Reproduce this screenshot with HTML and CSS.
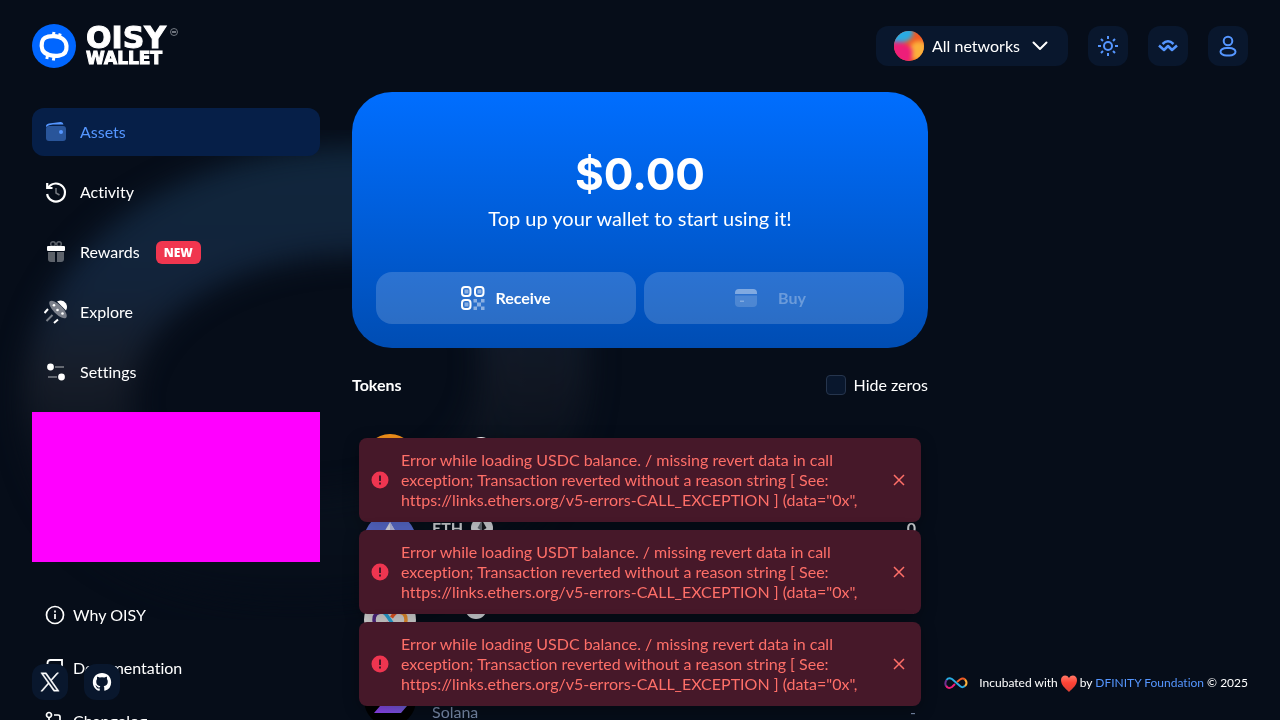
FILE: index.html
```html
<!DOCTYPE html>
<html lang="en">
<head>
<meta charset="utf-8">
<meta name="viewport" content="width=device-width, initial-scale=1">
<title>OISY Wallet</title>
<link rel="stylesheet" href="styles.css">
</head>
<body>
<svg class="backdrop" viewBox="0 0 1280 720" preserveAspectRatio="xMidYMin slice" aria-hidden="true">
  <defs>
    <linearGradient id="ring" gradientUnits="userSpaceOnUse" x1="300" y1="150" x2="300" y2="600">
      <stop offset="0" stop-color="#10263c"/>
      <stop offset=".3" stop-color="#12233a"/>
      <stop offset=".5" stop-color="#171d29"/>
      <stop offset=".65" stop-color="#0d141f"/>
      <stop offset=".85" stop-color="#070f1b"/>
      <stop offset="1" stop-color="#060d19"/>
    </linearGradient>
    <linearGradient id="fade" gradientUnits="userSpaceOnUse" x1="0" y1="0" x2="640" y2="0">
      <stop offset="0" stop-color="#fff"/>
      <stop offset=".55" stop-color="#fff"/>
      <stop offset=".8" stop-color="#aaa"/>
      <stop offset="1" stop-color="#999"/>
    </linearGradient>
    <mask id="side" maskUnits="userSpaceOnUse" x="-60" y="0" width="760" height="720"><rect x="-60" width="760" height="720" fill="url(#fade)"/></mask>
    <filter id="soft" x="-20%" y="-20%" width="140%" height="140%" color-interpolation-filters="sRGB"><feGaussianBlur stdDeviation="14"/></filter>
  </defs>
  <g mask="url(#side)"><path filter="url(#soft)" d="M78 400C78 290 190 200 370 200C470 200 535 260 535 365C535 490 430 550 300 550C160 550 78 500 78 400Z" fill="none" stroke="url(#ring)" stroke-width="108"/></g>
</svg>
<div class="app">
  <header class="header">
    <a class="logo" href="#" aria-label="OISY Wallet">
      <svg width="44" height="44" viewBox="0 0 44 44"><circle cx="22" cy="22" r="22" fill="#0066ff"/><g fill="none" stroke="#fff"><path stroke-width="4.200" d="M10 18C11 13 16 12 22 12.200C29 12.500 34 16 34.500 22C35 28 32 31 27 31.700C21 32.500 13 31 10.500 26C9.500 23.500 9.300 21 10 18Z"/><path stroke-width="3" d="M21 13l1-5M27 14l1.200-4.500M15.800 30l-1 5M22.300 31.500l-1 5"/></g></svg>
      <span class="wordmark"><span class="wordmark-top">OISY</span><span class="wordmark-sub">WALLET</span></span>
      <svg class="mark" width="8" height="8" viewBox="0 0 8 8"><circle cx="4" cy="4" r="3.500" fill="none" stroke="#8b9099" stroke-width=".8"/><path d="M2 4h4" stroke="#8b9099" stroke-width="1.600"/></svg>
    </a>
    <div class="tools">
      <button class="tool network">
        <svg width="30" height="30" viewBox="0 0 30 30"><defs><clipPath id="disc"><circle cx="15" cy="15" r="15"/></clipPath><filter id="melt" x="-30%" y="-30%" width="160%" height="160%" color-interpolation-filters="sRGB"><feGaussianBlur stdDeviation="2"/></filter></defs><g clip-path="url(#disc)"><rect width="30" height="30" fill="#f15a24"/><g filter="url(#melt)"><circle cx="25" cy="20" r="10" fill="#fbb03b"/><path fill="#29abe2" d="M-5-5H19V4Q15 11 9 11H-5Z"/><path fill="#ed1e79" d="M-5 12Q12 9 18 18Q20 26 13 35H-5Z"/></g></g></svg>
        <span>All networks</span>
        <svg width="20" height="20" viewBox="0 0 20 20" fill="none" stroke="#fff" stroke-width="2" stroke-linecap="round" stroke-linejoin="round"><path d="M3.500 6.500l6.500 6.500 6.500-6.500"/></svg>
      </button>
      <button class="tool" aria-label="Theme"><svg width="24" height="24" viewBox="0 0 24 24" fill="none" stroke="#5596ff" stroke-width="2"><circle cx="12" cy="12" r="4"/><path d="M12 2v3M12 19v3M2 12h3M19 12h3M5 5l2 2M17 17l2 2M5 19l2-2M17 7l2-2"/></svg></button>
      <button class="tool" aria-label="WalletConnect"><svg width="24" height="24" viewBox="0 0 24 24" fill="none" stroke="#5596ff" stroke-width="2.500" stroke-linejoin="round"><path d="M3 11.500l5 4.500 4-4 4 4 5-4.500"/><path d="M6.500 10Q12 4.500 17.500 10"/></svg></button>
      <button class="tool" aria-label="Account"><svg width="24" height="24" viewBox="0 0 24 24" fill="none" stroke="#5596ff" stroke-width="2"><circle cx="12" cy="7" r="4.300"/><rect x="4.500" y="14" width="15" height="7.500" rx="6" ry="3.750"/></svg></button>
    </div>
  </header>

  <div class="layout">
    <aside class="sidebar">
      <nav class="nav">
        <a class="nav-item active" href="#"><svg width="24" height="24" viewBox="0 0 24 24"><rect x="2" y="6" width="20" height="15" rx="3" fill="#5596ff" opacity=".45"/><path fill="#5596ff" d="M2 7Q1.500 4 5 3.400L16.500 2Q19 1.700 19.500 4.500H9Q4.500 4.500 2 7Z"/><circle cx="17" cy="12" r="2" fill="#5596ff"/></svg>Assets</a>
        <a class="nav-item" href="#"><svg width="24" height="24" viewBox="0 0 24 24" fill="none" stroke="#fff" stroke-width="2.200"><path d="M4.500 7.500A9 9 0 1 1 3.100 14M3.200 3v5h5.300"/><path d="M12 8v5l3.500 2" stroke-width="1.500" opacity=".45"/></svg>Activity</a>
        <a class="nav-item" href="#"><svg width="24" height="24" viewBox="0 0 24 24"><g fill="#fff"><rect x="3" y="6" width="18" height="5" rx="1"/><path opacity=".35" d="M4 12h7v10H7q-3 0-3-3ZM13 12h7v7q0 3-3 3h-4Z"/></g><g fill="none" stroke="#fff" stroke-width="1.500" opacity=".35"><circle cx="9" cy="4" r="2.300"/><circle cx="15" cy="4" r="2.300"/></g></svg>Rewards<span class="badge">NEW</span></a>
        <a class="nav-item" href="#"><svg width="24" height="24" viewBox="0 0 24 24"><path fill="#fff" d="M13 1.500q6-2.500 9 2 2 3.500 0 7Z"/><ellipse cx="14" cy="9.500" rx="4.500" ry="11.500" fill="#7b808b" transform="rotate(-45 14 9.500)"/><g fill="#fff"><circle cx="10" cy="5.200" r="1.300"/><circle cx="13.500" cy="10" r="1.300"/><circle cx="18.500" cy="13.500" r="1.300"/></g><g stroke="#fff" stroke-width="2"><path d="M.5 13L4 9M10 23l4-3.500"/><path opacity=".45" d="M2.500 21l6-6"/></g></svg>Explore</a>
        <a class="nav-item" href="#"><svg width="24" height="24" viewBox="0 0 24 24" fill="#fff"><circle cx="6.500" cy="7" r="3.400"/><circle cx="17.500" cy="17" r="3.400"/><path d="M11 7h9M4 17h9" stroke="#fff" stroke-width="1.500" opacity=".45"/></svg>Settings</a>
      </nav>
      <div class="promo"></div>
      <nav class="links">
        <a class="link" href="#"><svg width="20" height="20" viewBox="0 0 20 20" fill="none" stroke="#fff" stroke-width="1.700"><circle cx="10" cy="10" r="8.500"/><path d="M10 9v5M10 5.500v2"/></svg>Why OISY</a>
        <a class="link" href="#"><svg width="20" height="20" viewBox="0 0 20 20" fill="none" stroke="#fff" stroke-width="1.800"><path d="M2.500 17V5q0-3 3-3H17v16H5q-2.500 0-2.500-2t2.500-2h12"/></svg>Documentation</a>
        <a class="link" href="#"><svg width="20" height="20" viewBox="0 0 20 20" fill="none" stroke="#fff" stroke-width="1.700"><circle cx="4" cy="4" r="2.500"/><circle cx="15" cy="16" r="2.500"/><path d="M4 7v12M9 4h4q2 0 2 2v7"/></svg>Changelog</a>
      </nav>
    </aside>

    <main class="content">
      <section class="hero">
        <div class="amount">$0.00</div>
        <p class="hint">Top up your wallet to start using it!</p>
        <div class="actions">
          <button class="action receive"><svg width="24" height="24" viewBox="0 0 24 24"><g fill="none" stroke="#fff" stroke-width="2"><rect x="1" y="1" width="8.500" height="9" rx="3"/><rect x="14" y="1" width="8.500" height="9" rx="3"/><rect x="1" y="14" width="8.500" height="9" rx="3"/></g><g fill="#fff" opacity=".45"><rect x="3.500" y="3.500" width="4" height="4"/><rect x="16.500" y="3.500" width="4" height="4"/><rect x="3.500" y="16.500" width="4" height="4"/><path d="M12.500 13H16v3.500h4V13h3.500v3.500H20v4h3.500V24H20v-3.500h-4V24h-3.500v-3.500H16v-4h-3.500Z"/></g></svg>Receive</button>
          <button class="action buy" disabled><svg width="24" height="24" viewBox="0 0 24 24" fill="#fff"><path d="M1 8V7q0-4 4-4h14q4 0 4 4v1Z"/><path opacity=".4" d="M1 9.500h22V17q0 4-4 4H5q-4 0-4-4Z"/><path d="M6 14.500h4v1.500H6Z"/></svg>Buy</button>
        </div>
      </section>
      <div class="tokens-head">
        <h2>Tokens</h2>
        <label class="hide-zeros"><input type="checkbox">Hide zeros</label>
      </div>
      <ul class="tokens">
        <li class="token">
          <svg width="52" height="52" viewBox="0 0 52 52"><circle cx="26" cy="26" r="26" fill="#f7931a"/><path d="M20 14h8q6 0 6 6t-6 6h-8Zm0 12h9q6 0 6 6t-6 6h-9Z" fill="none" stroke="#fff" stroke-width="4"/></svg>
          <div class="token-text"><div class="token-name">BTC<svg width="22" height="22" viewBox="0 0 22 22"><circle cx="11" cy="11" r="11" fill="#fff"/></svg></div><div class="token-sub">Bitcoin</div></div>
          <div class="token-value"><div class="token-name">0</div><div class="token-sub">-</div></div>
        </li>
        <li class="token">
          <svg width="52" height="52" viewBox="0 0 52 52"><circle cx="26" cy="26" r="26" fill="#5c6fd6"/><path fill="#e8e9f3" d="M26 8l11 19-11 6.500L15 27Z"/><path fill="#c0c6ee" d="M26 8l11 19-11 6.500ZM26 45L15 30l11 6.500L37 30Z"/></svg>
          <div class="token-text"><div class="token-name">ETH<svg width="22" height="22" viewBox="0 0 22 22"><circle cx="11" cy="11" r="11" fill="#d9dce0"/><path fill="#687078" d="M11 3L6.500 11l4.500 3Z"/><path fill="#15191e" d="M11 3l4.500 8-4.500 3ZM6.500 13l4.500 3 4.500-3-4.500 6Z"/></svg></div><div class="token-sub">Ethereum</div></div>
          <div class="token-value"><div class="token-name">0</div><div class="token-sub">-</div></div>
        </li>
        <li class="token">
          <svg width="52" height="52" viewBox="0 0 52 52"><circle cx="26" cy="26" r="26" fill="#dcdcdc"/><g fill="none" stroke-width="3.500"><path stroke="#522785" d="M18 34Q10 34 10 26T18 18"/><path stroke="#f2932e" d="M34 18Q42 18 42 26T34 34"/><path stroke="#29abe2" d="M18 18Q21 18 26 26T34 34"/><path stroke="#ed1e79" d="M18 34Q21 34 24.500 28.500"/><path stroke="#f15a24" d="M27.500 23.500Q31 18 34 18"/></g></svg>
          <div class="token-text"><div class="token-name">ICP<svg width="22" height="22" viewBox="0 0 22 22"><circle cx="11" cy="11" r="11" fill="#d9dce0"/></svg></div><div class="token-sub">Internet Computer</div></div>
          <div class="token-value"><div class="token-name">0</div><div class="token-sub">-</div></div>
        </li>
        <li class="token">
          <svg width="52" height="52" viewBox="0 0 52 52"><defs><linearGradient id="sol" x1="0" y1="1" x2="1" y2="0"><stop stop-color="#9040f0"/><stop offset=".5" stop-color="#7656dc"/><stop offset="1" stop-color="#3c90ad"/></linearGradient></defs><circle cx="26" cy="26" r="26" fill="#000"/><path fill="url(#sol)" d="M16 13h27l-6 7H10ZM10 23h27l6 7H16ZM16 32h27l-6 7H10Z"/></svg>
          <div class="token-text"><div class="token-name">SOL</div><div class="token-sub">Solana</div></div>
          <div class="token-value"><div class="token-name">0</div><div class="token-sub">-</div></div>
        </li>
      </ul>
    </main>
  </div>
</div>

<footer class="footer">
  <div class="social">
    <a href="#" aria-label="X"><svg width="20" height="20" viewBox="0 0 24 24" fill="#fff"><path d="M14.095 10.316L22.286 1h-1.940l-7.115 8.087L7.551 1H1l8.590 12.231L1 23h1.940l7.510-8.543L16.450 23H23zm-2.658 3.022l-.872-1.218L3.640 2.432h2.980l5.590 7.821.869 1.219 7.265 10.166h-2.981z" stroke="#fff" stroke-width=".6"/></svg></a>
    <a href="#" aria-label="GitHub"><svg width="20" height="20" viewBox="0 0 24 24" fill="#fff"><path d="M12 1.300C5.700 1.300 1 6 1 12.200c0 4.900 3.100 9 7.500 10.400.6.100.8-.3.800-.6v-2.200c-3 .7-3.700-1.300-3.700-1.300-.5-1.300-1.200-1.600-1.200-1.600-1-.7.1-.7.1-.7 1.100.1 1.700 1.200 1.700 1.200 1 1.700 2.600 1.200 3.200.9.100-.7.400-1.200.7-1.500-2.400-.3-5-1.200-5-5.400 0-1.200.4-2.200 1.100-2.900-.1-.3-.5-1.400.1-2.900 0 0 .9-.3 3 1.100a10.500 10.500 0 0 1 5.400 0c2.100-1.400 3-1.100 3-1.100.6 1.500.2 2.600.1 2.900.7.800 1.100 1.700 1.100 2.900 0 4.200-2.600 5.100-5 5.400.4.300.8 1 .8 2V22c0 .3.200.7.800.6A11 11 0 0 0 23 12.200C23 6 18.300 1.300 12 1.300z"/></svg></a>
  </div>
  <div class="credit">
    <svg width="24" height="12" viewBox="0 0 24 12" fill="none" stroke-width="2"><path stroke="#29abe2" d="M2.500 3Q4.500 0 8 2l8 7q3 2.500 5-.5"/><path stroke="#ed1e79" d="M11 7L8 10Q4 12.500 2 8.500"/><path stroke="#72318f" d="M2 9Q.5 6 2.500 3"/><path stroke="#f15a24" d="M13 5l3-2.500q3-2 5 0"/><path stroke="#fbb03b" d="M21 2.500Q24 6 21 9"/></svg>
    <span>Incubated with</span>
    <svg class="heart" width="18" height="17" viewBox="0 0 18 17"><defs><linearGradient id="love" x2="0" y2="1"><stop stop-color="#ff7a68"/><stop offset=".45" stop-color="#ff4235"/><stop offset="1" stop-color="#d94034"/></linearGradient></defs><path fill="url(#love)" d="M9 3C7-1 1 0 1 5c0 5 4 8 8 12 4-4 8-7 8-12 0-5-6-6-8-2Z"/></svg>
    <span>by <a href="#">DFINITY Foundation</a> © 2025</span>
  </div>
</footer>

<div class="toasts">
  <div class="toast" role="alert">
    <svg width="18" height="18" viewBox="0 0 18 18"><circle cx="9" cy="9" r="8.500" fill="#ee3550"/><path d="M9 4.500v5.500M9 11.500v2" stroke="#461829" stroke-width="2"/></svg>
    <p>Error while loading USDC balance. / missing revert data in call<br>exception; Transaction reverted without a reason string [ See:<br>https://links.ethers.org/v5-errors-CALL_EXCEPTION ] (data="0x",</p>
    <button aria-label="Close"><svg width="12" height="12" viewBox="0 0 12 12" stroke="#ff6f68" stroke-width="1.500"><path d="M1 1l10 10M11 1L1 11"/></svg></button>
  </div>
  <div class="toast" role="alert">
    <svg width="18" height="18" viewBox="0 0 18 18"><circle cx="9" cy="9" r="8.500" fill="#ee3550"/><path d="M9 4.500v5.500M9 11.500v2" stroke="#461829" stroke-width="2"/></svg>
    <p>Error while loading USDT balance. / missing revert data in call<br>exception; Transaction reverted without a reason string [ See:<br>https://links.ethers.org/v5-errors-CALL_EXCEPTION ] (data="0x",</p>
    <button aria-label="Close"><svg width="12" height="12" viewBox="0 0 12 12" stroke="#ff6f68" stroke-width="1.500"><path d="M1 1l10 10M11 1L1 11"/></svg></button>
  </div>
  <div class="toast" role="alert">
    <svg width="18" height="18" viewBox="0 0 18 18"><circle cx="9" cy="9" r="8.500" fill="#ee3550"/><path d="M9 4.500v5.500M9 11.500v2" stroke="#461829" stroke-width="2"/></svg>
    <p>Error while loading USDC balance. / missing revert data in call<br>exception; Transaction reverted without a reason string [ See:<br>https://links.ethers.org/v5-errors-CALL_EXCEPTION ] (data="0x",</p>
    <button aria-label="Close"><svg width="12" height="12" viewBox="0 0 12 12" stroke="#ff6f68" stroke-width="1.500"><path d="M1 1l10 10M11 1L1 11"/></svg></button>
  </div>
</div>
</body>
</html>
```
FILE: styles.css
```css
* { box-sizing: border-box; }
html { background: #060d19; }
body {
  margin: 0;
  height: 100vh;
  overflow: hidden;
  color: #fff;
  font: 16px/20px Lato, "Liberation Sans", sans-serif;
  font-variant-ligatures: none;
}
a { color: inherit; text-decoration: none; }
button { font: inherit; color: inherit; border: 0; padding: 0; cursor: pointer; }
svg { display: block; flex: none; }
p, h2, ul { margin: 0; padding: 0; }

.backdrop { position: fixed; inset: 0; width: 100%; height: 100%; }
.app { position: relative; padding: 24px 32px; }

.header { display: flex; justify-content: space-between; align-items: center; }
.logo { display: flex; align-items: center; }
.wordmark {
  display: flex;
  flex-direction: column;
  margin: 0 4px 0 10px;
  font-family: "DejaVu Sans", sans-serif;
  font-weight: 700;
  -webkit-text-stroke: 1px #fff;
}
.wordmark-top { font-size: 30px; line-height: 24px; }
.wordmark-sub { font-size: 17px; line-height: 16px; }
.mark { align-self: flex-start; margin-top: 4px; }
.tools { display: flex; gap: 20px; }
.tool {
  display: flex;
  align-items: center;
  justify-content: center;
  width: 40px;
  height: 40px;
  border-radius: 12px;
  background: #09172d;
}
.network { width: 192px; gap: 8px; }
.network span { margin-right: 2px; }

.layout {
  display: grid;
  grid-template-columns: 288px minmax(0, 576px) 1fr;
  column-gap: 32px;
  margin-top: 24px;
}
.sidebar { padding-top: 16px; }
.nav { display: flex; flex-direction: column; gap: 12px; }
.nav-item {
  display: flex;
  align-items: center;
  gap: 12px;
  height: 48px;
  padding: 0 12px;
  border-radius: 12px;
}
.active { background: #061f48; color: #5596ff; }
.badge {
  margin-left: 4px;
  padding: 2px 8px;
  border-radius: 6px;
  background: #f0364f;
  font: 800 12px/19px "Open Sans", sans-serif;
}
.promo { height: 150px; margin-top: 16px; background: #f0f; }
.links { display: flex; flex-direction: column; gap: 33px; margin-top: 43px; padding-left: 13px; }
.link { display: flex; align-items: center; gap: 8px; }

.hero {
  padding: 56px 24px 24px;
  border-radius: 40px;
  background: linear-gradient(#006eff, #004db3);
  text-align: center;
}
.amount { font: 700 44px/52px Inter, sans-serif; }
.hint { margin-top: 6px; font-size: 20px; line-height: 24px; }
.actions { display: grid; grid-template-columns: 1fr 1fr; gap: 8px; margin-top: 42px; }
.action {
  display: flex;
  align-items: center;
  justify-content: center;
  gap: 10px;
  height: 52px;
  border-radius: 16px;
  background: rgba(255, 255, 255, .17);
  font-weight: 700;
}
.buy { gap: 20px; padding-right: 8px; color: rgba(255, 255, 255, .3); }
.buy svg { opacity: .4; }

.tokens-head {
  display: flex;
  justify-content: space-between;
  align-items: center;
  height: 72px;
  padding-top: 2px;
}
.tokens-head h2 { font-size: 16px; line-height: 20px; }
.hide-zeros { display: flex; align-items: center; gap: 8px; }
.hide-zeros input {
  appearance: none;
  width: 20px;
  height: 20px;
  margin: 0;
  border: 1px solid #26354d;
  border-radius: 4px;
  background: #09172d;
}
.tokens { list-style: none; }
.token { display: flex; align-items: center; gap: 16px; height: 80px; padding: 0 12px; }
.token-text { flex: 1; }
.token-name { display: flex; align-items: center; gap: 8px; height: 24px; font-weight: 700; color: #d9dce0; }
.token-sub { line-height: 24px; color: #7485a3; }
.token-value { text-align: right; }
.token-value .token-name { justify-content: flex-end; }

.footer {
  position: fixed;
  left: 32px;
  right: 32px;
  bottom: 20px;
  display: flex;
  justify-content: space-between;
  align-items: center;
}
.social { display: flex; gap: 16px; }
.social a {
  display: grid;
  place-items: center;
  width: 36px;
  height: 36px;
  border-radius: 12px;
  background: #09172d;
}
.credit { display: flex; align-items: center; gap: 2px; padding-top: 2px; font-size: 12px; }
.credit > svg:first-child { margin-right: 9px; }
.credit a { color: #5596ff; }

.toasts {
  position: fixed;
  left: 50%;
  bottom: 14px;
  width: min(562px, 100%);
  transform: translateX(-50%);
  display: flex;
  flex-direction: column;
  gap: 8px;
}
.toast {
  display: flex;
  align-items: center;
  gap: 12px;
  padding: 12px 16px 12px 12px;
  border-radius: 8px;
  background: #461829;
  color: #ff6f68;
  box-shadow: 0 4px 16px rgba(0, 0, 0, .3);
}
.toast p { flex: 1; white-space: nowrap; }
.toast button { background: none; }
```
